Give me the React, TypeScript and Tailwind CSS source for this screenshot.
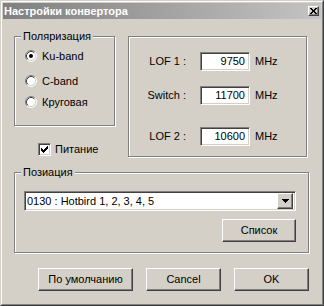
import React from 'react'

const sunken = "border border-t-[#808080] border-l-[#808080] border-b-white border-r-white shadow-[inset_1px_1px_0_#404040,inset_-1px_-1px_0_#d4d0c8]"
const raised = "border border-t-white border-l-white border-b-[#404040] border-r-[#404040] shadow-[inset_-1px_-1px_0_#808080]"
const etched = "border border-[#808080] shadow-[inset_1px_1px_0_#fff,1px_1px_0_#fff]"

const Radio = ({ checked }: { checked?: boolean }) => (
  <svg width="12" height="12" viewBox="0 0 12 12" className="shrink-0">
    <circle cx="6" cy="6" r="5" fill="#fff" />
    <path d="M2.11 9.89 A5.5 5.5 0 0 1 9.89 2.11" fill="none" stroke="#808080" />
    <path d="M9.89 2.11 A5.5 5.5 0 0 1 2.11 9.89" fill="none" stroke="#fff" />
    <path d="M2.82 9.18 A4.5 4.5 0 0 1 9.18 2.82" fill="none" stroke="#404040" />
    <path d="M9.18 2.82 A4.5 4.5 0 0 1 2.82 9.18" fill="none" stroke="#d4d0c8" />
    {checked && <circle cx="6" cy="6" r="2" fill="#000" />}
  </svg>
)

// classic 7x7 check mark, one 3px column per x
const checkCols = [[3, 5], [4, 6], [5, 7], [6, 6], [7, 5], [8, 4], [9, 3]]

const Checkbox = () => (
  <div className={`w-[13px] h-[13px] bg-white shrink-0 relative ${sunken}`}>
    <svg width="13" height="13" viewBox="0 0 13 13" className="absolute -left-px -top-px" shapeRendering="crispEdges">
      {checkCols.map(([x, y]) => (
        <rect key={x} x={x} y={y} width="1" height="3" fill="#000" />
      ))}
    </svg>
  </div>
)

const Field = ({ label, value, className }: { label: string; value: string; className?: string }) => (
  <div className={`flex items-center ${className ?? ''}`}>
    <span className="w-[46px] ml-[11px] text-right whitespace-nowrap">{label}</span>
    <div className={`w-[50px] h-[19px] ml-[14px] bg-white flex items-center justify-end pr-[4px] ${sunken}`}>
      {value}
    </div>
    <span className="ml-[5px]">MHz</span>
  </div>
)

const Button = ({ children, w }: { children: React.ReactNode; w: string }) => (
  <button className={`${w} h-[23px] flex items-center justify-center bg-[#d4d0c8] ${raised}`}>
    {children}
  </button>
)

export default function App() {
  return (
    <div className="w-[324px] h-[306px] bg-[#d4d0c8] text-black text-[11px] leading-[13px] font-['Liberation_Sans',Arial,sans-serif] border border-t-[#d4d0c8] border-l-[#d4d0c8] border-b-[#404040] border-r-[#404040]">
      <div className="h-full flex flex-col p-px border border-t-white border-l-white border-b-[#808080] border-r-[#808080]">
        {/* title bar (inactive) */}
        <div className="h-[16px] shrink-0 flex items-center justify-between pl-[1px] pr-[2px] bg-linear-to-r from-[#808080] to-[#c4c4c4]">
          <span className="font-bold text-white whitespace-nowrap">Настройки конвертора</span>
          <div className={`w-[11px] h-[10px] bg-[#d4d0c8] flex items-center justify-center ${raised}`}>
            <svg width="7" height="6" viewBox="0 0 7 6" shapeRendering="crispEdges">
              <path d="M0 0h2v1h-2zM5 0h2v1h-2zM1 1h2v1h-2zM4 1h2v1h-2zM2 2h3v2h-3zM1 4h2v1h-2zM4 4h2v1h-2zM0 5h2v1h-2zM5 5h2v1h-2z" fill="#000" />
            </svg>
          </div>
        </div>

        <div className="flex-1 flex flex-col pl-[11px]">
          <div className="flex items-start mt-[17px]">
            <div className="w-[101px] flex flex-col">
              <div className={`relative h-[90px] flex flex-col pl-[10px] ${etched}`}>
                <span className="absolute -top-[7px] left-[6px] px-[2px] bg-[#d4d0c8]">Поляризация</span>
                <div className="flex items-center gap-[5px] mt-[13px] h-[12px]">
                  <Radio checked />
                  <span>Ku-band</span>
                </div>
                <div className="flex items-center gap-[5px] mt-[13px] h-[12px]">
                  <Radio />
                  <span>C-band</span>
                </div>
                <div className="flex items-center gap-[5px] mt-[9px] h-[12px]">
                  <Radio />
                  <span>Круговая</span>
                </div>
              </div>
              <div className="flex items-center gap-[4px] mt-[17px] ml-[24px] h-[13px]">
                <Checkbox />
                <span>Питание</span>
              </div>
            </div>

            <div className={`w-[179px] h-[121px] ml-[13px] flex flex-col ${etched}`}>
              <Field label="LOF 1 :" value="9750" className="mt-[15px]" />
              <Field label="Switch :" value="11700" className="mt-[15px]" />
              <Field label="LOF 2 :" value="10600" className="mt-[22px]" />
            </div>
          </div>

          <div className={`relative w-[295px] h-[81px] mt-[15px] flex flex-col pt-[18px] pl-[9px] pr-[12px] ${etched}`}>
            <span className="absolute -top-[7px] left-[6px] px-[2px] bg-[#d4d0c8]">Позиация</span>
            <div className={`h-[20px] bg-white flex items-center pl-[2px] pr-[2px] ${sunken}`}>
              <span className="flex-1 whitespace-nowrap">0130 : Hotbird 1, 2, 3, 4, 5</span>
              <div className={`w-[16px] h-[16px] bg-[#d4d0c8] flex items-center justify-center ${raised}`}>
                <svg width="7" height="4" viewBox="0 0 7 4" shapeRendering="crispEdges">
                  <path d="M0 0h7v1h-7zM1 1h5v1h-5zM2 2h3v1h-3zM3 3h1v1h-1z" fill="#000" />
                </svg>
              </div>
            </div>
            <div className="flex justify-end mt-[8px]">
              <Button w="w-[74px]">Список</Button>
            </div>
          </div>

          <div className="flex gap-[13px] mt-[15px] ml-[24px]">
            <Button w="w-[95px]">По умолчанию</Button>
            <Button w="w-[75px]">Cancel</Button>
            <Button w="w-[75px]">OK</Button>
          </div>
        </div>
      </div>
    </div>
  )
}
